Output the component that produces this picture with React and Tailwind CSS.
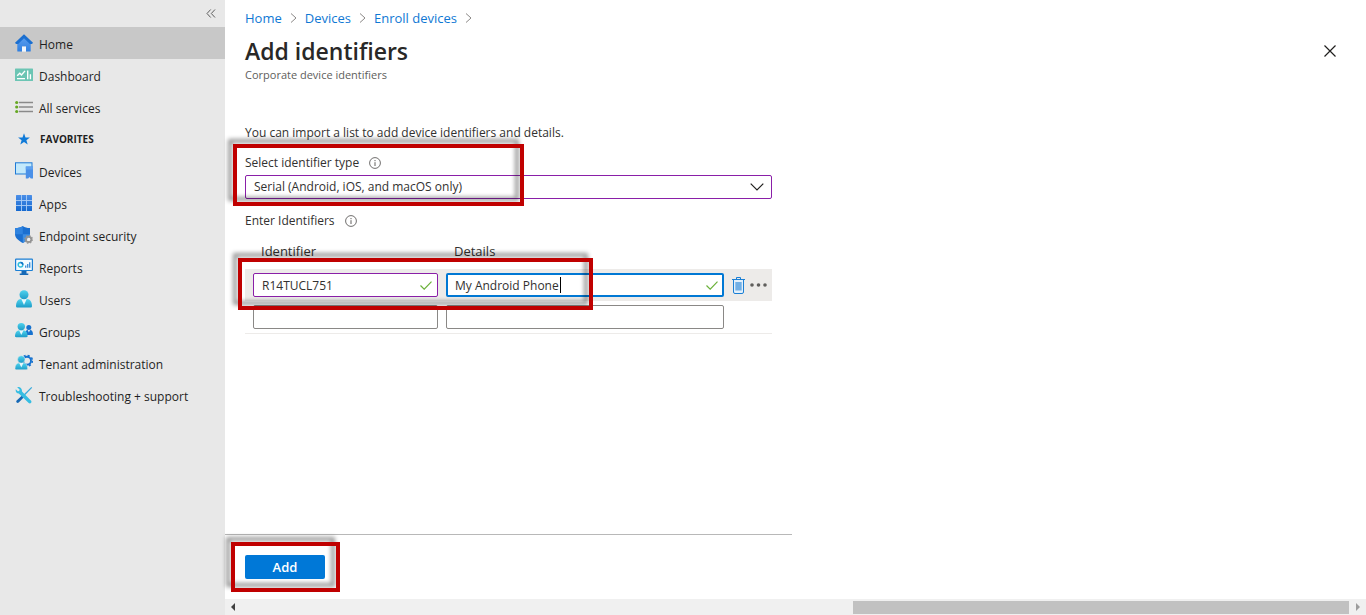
import { useState } from "react";

function HomeIcon() {
  return (
    <svg viewBox="0 0 18 18" className="size-[18px]" aria-hidden="true">
      <defs>
        <linearGradient id="homeWall" x1="0" y1="0" x2="0" y2="1">
          <stop offset="0" stopColor="#5ea0ef" />
          <stop offset="1" stopColor="#2f7fe0" />
        </linearGradient>
      </defs>
      <path d="M2.3 8.5 9 2.2l6.700 6.300V17a.6.6 0 0 1-.6.6H11v-5H7v5H2.900a.6.6 0 0 1-.6-.6z" fill="url(#homeWall)" />
      <path d="M7 12.600h4v5H7z" fill="#f2f6fb" />
      <path d="M9 .2 18 8.800l-1 1.100H14.900L9 4.300 3.100 9.900H1L0 8.800z" fill="#1b6fd0" />
    </svg>
  );
}

function DashboardIcon() {
  return (
    <svg viewBox="0 0 18 18" className="size-[18px]" aria-hidden="true">
      <rect x="0" y="2.500" width="18" height="12.500" rx=".6" fill="#6cc5b4" />
      <rect x="2" y="12" width="8" height="1.300" fill="#fff" />
      <path d="M2.200 9.800 4.800 7.200l1.700 1.800L10 4.900" fill="none" stroke="#fff" strokeWidth="1.400" />
      <path d="M12 4.600h1.400v8.700H12zM14.700 8.200h1.400v5.100h-1.400z" fill="#fff" />
    </svg>
  );
}

function ServicesIcon() {
  return (
    <svg viewBox="0 0 18 18" className="size-[18px]" aria-hidden="true">
      <path d="M4 4.500h14M4 9h14M4 13.500h14" stroke="#8a8a8a" strokeWidth="1.500" />
      <circle cx="1.700" cy="4.500" r="1.600" fill="#66a823" />
      <circle cx="1.700" cy="9" r="1.600" fill="#66a823" />
      <circle cx="1.700" cy="13.500" r="1.600" fill="#66a823" />
    </svg>
  );
}

function StarIcon() {
  return (
    <svg viewBox="0 0 18 18" className="size-[18px]" aria-hidden="true">
      <path d="m9 3.200 1.500 4.200 4.400.1-3.500 2.700 1.300 4.300L9 12l-3.700 2.500 1.300-4.300-3.500-2.700 4.400-.1z" fill="#0f7ad8" />
    </svg>
  );
}

function DevicesIcon() {
  return (
    <svg viewBox="0 0 18 18" className="size-[18px]" aria-hidden="true">
      <rect x=".5" y=".8" width="16.500" height="11.200" fill="#c3e9fb" stroke="#1f7ad6" strokeWidth="1" />
      <path d="M10.800 4.500H18V16.500h-2.200l-1.300-1.500-1.300 1.500h-2.400z" fill="#4a90e8" />
      <path d="M10.800 4.500H18v3h-7.200z" fill="#5ea0ef" />
    </svg>
  );
}

function AppsIcon() {
  return (
    <svg viewBox="0 0 18 18" className="size-[18px]" aria-hidden="true">
      <defs>
        <linearGradient id="appsFill" x1="0" y1="0" x2="0" y2="1">
          <stop offset="0" stopColor="#4c8fe8" />
          <stop offset="1" stopColor="#1468cf" />
        </linearGradient>
      </defs>
      <rect x="1" y="1" width="16" height="16" rx=".5" fill="url(#appsFill)" />
      <path d="M6.500 1v16M11.500 1v16M1 6.500h16M1 11.500h16" stroke="#a9cdf6" strokeWidth=".9" />
    </svg>
  );
}

function ShieldIcon() {
  return (
    <svg viewBox="0 0 18 18" className="size-[18px]" aria-hidden="true">
      <path d="M7.800 0c2 1.500 4.200 2.100 7.200 2.100v6c0 4.200-3.500 7-7.200 8.900C4.100 15.100 0 12.300 0 8.100v-6C3.300 2.100 5.800 1.500 7.800 0z" fill="#1b6fd0" />
      <path d="M7.800 0v8.300H0V2.100C3.300 2.100 5.800 1.500 7.800 0z" fill="#2f83df" />
      <path d="M7.800 8.300H15c-.3 4-3.600 6.900-7.200 8.700z" fill="#3d8ee4" />
      <circle cx="13.600" cy="13.400" r="2.600" fill="none" stroke="#949494" strokeWidth="1.900" />
      <circle cx="13.600" cy="13.400" r="3.800" fill="none" stroke="#949494" strokeWidth="1.200" strokeDasharray="1.500 1.480" />
      <circle cx="13.600" cy="13.400" r="1.600" fill="#ececec" />
    </svg>
  );
}

function ReportsIcon() {
  return (
    <svg viewBox="0 0 18 18" className="size-[18px]" aria-hidden="true">
      <path d="M6.500 12.500h5v3h1.800V17H4.700v-1.500h1.800z" fill="#1668b5" />
      <rect x=".6" y="1.200" width="16.800" height="11.300" rx=".5" fill="#f4fbff" stroke="#1b7fd4" strokeWidth="1.200" />
      <circle cx="5.500" cy="6.700" r="2.300" fill="none" stroke="#32bedd" strokeWidth="1.500" />
      <path d="M5.500 4.400a2.300 2.300 0 0 1 2.300 2.300" fill="none" stroke="#0f6fc6" strokeWidth="1.500" />
      <path d="M10 7.500h1.400v2.300H10zM12 6h1.400v3.800H12zM14 4.200h1.400v5.600H14z" fill="#4593d8" />
    </svg>
  );
}

function CyanGradient({ id }) {
  return (
    <defs>
      <linearGradient id={id} x1="0" y1="0" x2="0" y2="1">
        <stop offset="0" stopColor="#4fd3ee" />
        <stop offset="1" stopColor="#1d9cc8" />
      </linearGradient>
    </defs>
  );
}

function UsersIcon() {
  return (
    <svg viewBox="0 0 18 18" className="size-[18px]" aria-hidden="true">
      <CyanGradient id="userFill" />
      <path d="M1 16c.2-4 1.800-7 5-7h6c3.200 0 4.800 3 5 7 0 1-.6 1.500-1.600 1.500H2.600C1.600 17.500 1 17 1 16z" fill="url(#userFill)" />
      <path d="m6.300 9 2.700 6 2.700-6z" fill="#e9f8fc" />
      <circle cx="9" cy="4.800" r="4.500" fill="url(#userFill)" />
    </svg>
  );
}

function GroupsIcon() {
  return (
    <svg viewBox="0 0 18 18" className="size-[18px]" aria-hidden="true">
      <CyanGradient id="groupFill" />
      <circle cx="13.800" cy="5.500" r="2.500" fill="#1672cf" />
      <path d="M10 12c.1-2.300 1-4 2.600-4h2.600C17 8 17.900 10 18 12.200c0 .5-.3.800-.8.800H10z" fill="#1672cf" />
      <path d="m12.700 8 1.200 2.500L15.100 8z" fill="#d9ecfb" />
      <path d="M0 14c.1-3.200 1.400-5.600 4-5.600h4.600c2.600 0 3.900 2.400 4 5.600 0 .8-.4 1.200-1.200 1.200H1.200C.4 15.200 0 14.800 0 14z" fill="url(#groupFill)" />
      <path d="m4.200 8.400 2.100 4.600 2.100-4.600z" fill="#e9f8fc" />
      <circle cx="6.300" cy="4.600" r="3.700" fill="url(#groupFill)" />
    </svg>
  );
}

function TenantIcon() {
  return (
    <svg viewBox="0 0 18 18" className="size-[18px]" aria-hidden="true">
      <CyanGradient id="tenantFill" />
      <circle cx="12" cy="6.800" r="4" fill="none" stroke="#1672cf" strokeWidth="1.900" />
      <circle cx="12" cy="6.800" r="5.400" fill="none" stroke="#1672cf" strokeWidth="1.600" strokeDasharray="2.100 2.140" />
      <path d="M0 14.600C.1 11.400 1.400 9 4 9h4.600c2.600 0 3.900 2.400 4 5.600 0 .8-.4 1.200-1.200 1.200H1.200C.4 15.800 0 15.400 0 14.600z" fill="url(#tenantFill)" stroke="#e8e8e8" strokeWidth=".5" />
      <path d="m4.200 9 2.100 4.600L8.400 9z" fill="#e9f8fc" />
      <circle cx="6.300" cy="5.400" r="3.700" fill="url(#tenantFill)" stroke="#e8e8e8" strokeWidth=".5" />
    </svg>
  );
}

function ToolsIcon() {
  return (
    <svg viewBox="0 0 18 18" className="size-[18px]" aria-hidden="true">
      <path d="M16.300.9 17.200 1.800 9.700 9.600l-1-1z" fill="#37a9dc" />
      <path d="M8.300 8.200 10.100 10 4 16.300c-.8.800-1.600.9-2.300.2s-.6-1.500.2-2.300z" fill="#1668b5" />
      <path d="M2.200 1.200 4.600 3.600 4.200 5 2.800 5.300.8 3.200C.3 5.200 1.200 7.400 3.800 7.500L13.700 17c1.700 1.200 3.500-.7 2.400-2.300L7 5.600C7.400 3 5.200.2 2.200 1.200z" fill="#35bde2" />
    </svg>
  );
}

const primary = [
  { label: "Home", Icon: HomeIcon, active: true },
  { label: "Dashboard", Icon: DashboardIcon },
  { label: "All services", Icon: ServicesIcon },
];

const favorites = [
  { label: "Devices", Icon: DevicesIcon },
  { label: "Apps", Icon: AppsIcon },
  { label: "Endpoint security", Icon: ShieldIcon },
  { label: "Reports", Icon: ReportsIcon },
  { label: "Users", Icon: UsersIcon },
  { label: "Groups", Icon: GroupsIcon },
  { label: "Tenant administration", Icon: TenantIcon },
  { label: "Troubleshooting + support", Icon: ToolsIcon },
];

function NavItem({ label, Icon, active }) {
  return (
    <li>
      <a
        href="#"
        aria-current={active ? "page" : undefined}
        className={`flex h-8 items-center gap-1.5 pl-[15px] ${active ? "bg-[#c8c8c8]" : ""}`}
      >
        <Icon />
        <span className="pt-1">{label}</span>
      </a>
    </li>
  );
}

function Sidebar() {
  return (
    <nav aria-label="Main" className="w-[225px] shrink-0 bg-[#e8e8e8] text-[#1f1f1f]">
      <div className="flex h-[27px] items-center justify-end pr-[7px]">
        <button type="button" aria-label="Collapse menu" className="p-0.5">
          <svg viewBox="0 0 10 10" className="size-2.5" fill="none" stroke="#5c5c5c" aria-hidden="true">
            <path d="M4.700.5 1 4.500l3.700 4M9 .5 5.300 4.500 9 8.500" />
          </svg>
        </button>
      </div>
      <ul>
        {primary.map((item) => (
          <NavItem key={item.label} {...item} />
        ))}
      </ul>
      <h2 className="flex h-8 items-center gap-[7px] pl-[15px] text-[10px] font-bold">
        <StarIcon />
        FAVORITES
      </h2>
      <ul>
        {favorites.map((item) => (
          <NavItem key={item.label} {...item} />
        ))}
      </ul>
    </nav>
  );
}

function Crumb({ children }) {
  return (
    <li className="flex items-center gap-2">
      <a href="#" className="text-[#0f78d4]">{children}</a>
      <svg viewBox="0 0 7 10" className="h-2.5 w-[7px]" fill="none" stroke="#8a8886" aria-hidden="true">
        <path d="m1 .5 5 4.500-5 4.500" />
      </svg>
    </li>
  );
}

function InfoIcon() {
  return (
    <svg viewBox="0 0 12 12" className="size-3" fill="none" stroke="#605e5c" aria-hidden="true">
      <circle cx="6" cy="6" r="5.400" strokeWidth=".9" />
      <path d="M6 5.200V9M6 3v1.200" />
    </svg>
  );
}

function Highlight({ className }) {
  return (
    <span
      aria-hidden="true"
      className={`pointer-events-none absolute z-10 border-4 border-[#c00000] drop-shadow-[-5px_-5px_2px_rgba(0,0,0,0.4)] ${className}`}
    />
  );
}

function CheckMark() {
  return (
    <svg viewBox="0 0 12 9" className="pointer-events-none absolute top-2 right-1.5 h-[9px] w-3" fill="none" stroke="#6bb13a" strokeWidth="1.200" aria-hidden="true">
      <path d="m.5 4.500 3.700 3.700L11.500.7" />
    </svg>
  );
}

function IdentifierTable() {
  const [identifier, setIdentifier] = useState("R14TUCL751");
  const [details, setDetails] = useState("My Android Phone");
  const box = "block h-6 w-full rounded-xs bg-white outline-none";
  return (
    <div className="relative">
      <table className="w-full table-fixed border-collapse text-left">
        <colgroup>
          <col className="w-[193px]" />
          <col />
          <col className="w-12" />
        </colgroup>
        <thead className="text-[13px]">
          <tr>
            <th id="col-identifier" scope="col" className="pb-2 pl-4 font-medium">Identifier</th>
            <th id="col-details" scope="col" className="pb-2 pl-4 font-medium">Details</th>
            <td />
          </tr>
        </thead>
        <tbody>
          <tr className="bg-[#edebe9]">
            <td className="py-1 pl-2">
              <div className="relative">
                <input
                  aria-labelledby="col-identifier"
                  value={identifier}
                  onChange={(e) => setIdentifier(e.target.value)}
                  className={`${box} border border-[#8a1fa8] px-2`}
                />
                <CheckMark />
              </div>
            </td>
            <td className="py-1 pl-2">
              <div className="relative">
                <input
                  aria-labelledby="col-details"
                  value={details}
                  onChange={(e) => setDetails(e.target.value)}
                  className={`${box} border-2 border-[#0078d4] px-[7px]`}
                />
                <span aria-hidden="true" className="absolute top-1 left-[114px] h-4 w-px bg-black" />
                <CheckMark />
              </div>
            </td>
            <td className="pl-2">
              <div className="flex items-center gap-[5px]">
                <button type="button" aria-label="Delete row">
                  <svg viewBox="0 0 13 17" className="h-[17px] w-[13px]" fill="none" stroke="#1b7fd4" aria-hidden="true">
                    <path d="M1.500 3v12q0 1.500 1.500 1.500h7q1.500 0 1.500-1.500V3" fill="#e3f0fb" />
                    <path d="M3.300 5h6.400v8.500H3.300z" fill="#71afe5" stroke="none" />
                    <path d="M0 2.500h13M4.500 2.500v-2h4v2" />
                  </svg>
                </button>
                <button type="button" aria-label="More actions">
                  <svg viewBox="0 0 17 4" className="h-1 w-[17px]" fill="#605e5c" aria-hidden="true">
                    <circle cx="2" cy="2" r="1.800" />
                    <circle cx="8.500" cy="2" r="1.800" />
                    <circle cx="15" cy="2" r="1.800" />
                  </svg>
                </button>
              </div>
            </td>
          </tr>
          <tr className="border-b border-[#edebe9]">
            <td className="py-1 pl-2">
              <input aria-labelledby="col-identifier" className={`${box} border border-[#8a8886] px-2`} />
            </td>
            <td className="py-1 pl-2">
              <input aria-labelledby="col-details" className={`${box} border border-[#8a8886] px-2`} />
            </td>
            <td />
          </tr>
        </tbody>
      </table>
      <Highlight className="top-[17px] -left-[7px] h-[52px] w-[355px]" />
    </div>
  );
}

function ScrollBar() {
  return (
    <div aria-hidden="true" className="flex h-4 items-center bg-[#f0f0f0]">
      <span className="flex w-4 justify-center">
        <svg viewBox="0 0 4 8" className="h-2 w-1" fill="#404040"><path d="M4 0v8L0 4z" /></svg>
      </span>
      <span className="flex flex-1 justify-end">
        <span className="h-[13px] w-[496px] bg-[#c1c1c1]" />
      </span>
      <span className="flex w-[17px] justify-center">
        <svg viewBox="0 0 4 8" className="h-2 w-1" fill="#9c9c9c"><path d="M0 0v8l4-4z" /></svg>
      </span>
    </div>
  );
}

export default function App() {
  return (
    <div className="flex min-h-screen bg-white font-['Open_Sans','Noto_Sans',sans-serif] text-[12px] leading-5 text-[#323130]">
      <Sidebar />
      <main className="flex min-w-0 flex-1 flex-col">
        <header className="px-5 pt-2">
          <nav aria-label="Breadcrumb">
            <ol className="flex gap-2 text-[13px]">
              <Crumb>Home</Crumb>
              <Crumb>Devices</Crumb>
              <Crumb>Enroll devices</Crumb>
            </ol>
          </nav>
          <div className="mt-[7px] flex items-center justify-between pr-2.5">
            <h1 className="text-[23px] leading-8 font-semibold text-[#292827]">Add identifiers</h1>
            <button type="button" aria-label="Close">
              <svg viewBox="0 0 12 12" className="size-3" fill="none" stroke="#201f1e" strokeWidth="1.200" aria-hidden="true">
                <path d="m.5.5 11 11M11.500.5l-11 11" />
              </svg>
            </button>
          </div>
          <p className="text-[11px] leading-4 text-[#605e5c]">Corporate device identifiers</p>
        </header>

        <form className="flex max-w-[567px] flex-1 flex-col" onSubmit={(e) => e.preventDefault()}>
          <div className="flex flex-1 flex-col gap-2.5 px-5 pt-10">
            <p>You can import a list to add device identifiers and details.</p>
            <div className="relative">
              <div className="flex items-center gap-2.5">
                <label htmlFor="identifier-type">Select identifier type</label>
                <InfoIcon />
              </div>
              <div className="relative mt-0.5">
                <select id="identifier-type" className="block h-6 w-full appearance-none rounded-xs border border-[#8a1fa8] bg-white px-2 outline-none">
                  <option>Serial (Android, iOS, and macOS only)</option>
                </select>
                <svg viewBox="0 0 14 8" className="pointer-events-none absolute top-2 right-2 h-2 w-3.5" fill="none" stroke="#201f1e" strokeWidth="1.200" aria-hidden="true">
                  <path d="m.7.7 6.300 6.300L13.300.7" />
                </svg>
              </div>
              <Highlight className="-top-[9px] -left-3 h-[62px] w-[291px]" />
            </div>
            <div className="mt-0.5 flex items-center gap-2.5">
              <span>Enter Identifiers</span>
              <InfoIcon />
            </div>
            <IdentifierTable />
          </div>
          <div className="border-t border-[#b8b8b8] px-5 py-5">
            <div className="relative w-20">
              <button type="submit" className="block h-6 w-full rounded-xs bg-[#0078d7] text-[13px] font-semibold text-white">
                Add
              </button>
              <Highlight className="-top-[13px] -left-3.5 h-[50px] w-[109px]" />
            </div>
          </div>
        </form>
        <ScrollBar />
      </main>
    </div>
  );
}
